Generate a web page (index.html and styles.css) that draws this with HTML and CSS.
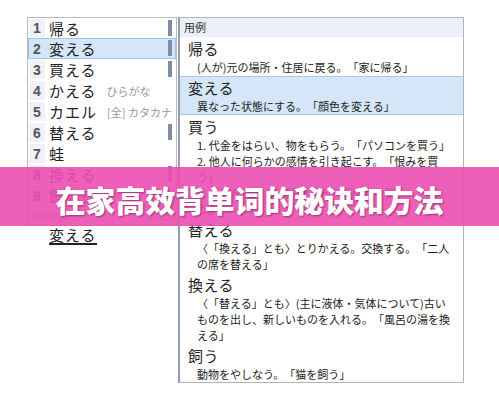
FILE: index.html
```html
<!DOCTYPE html>
<html lang="ja">
<head>
<meta charset="utf-8">
<link rel="stylesheet" href="styles.css">
</head>
<body>
<div class="stage">
  <div class="leftcol">
    <div class="cands">
      <div class="row"><span class="num">1</span><span class="word">帰る</span><span class="bar"></span></div>
      <div class="row sel"><span class="num">2</span><span class="word">変える</span><span class="bar"></span></div>
      <div class="row"><span class="num">3</span><span class="word">買える</span><span class="bar"></span></div>
      <div class="row"><span class="num">4</span><span class="word">かえる</span><span class="note">ひらがな</span></div>
      <div class="row"><span class="num">5</span><span class="word">カエル</span><span class="note">[全] カタカナ</span></div>
      <div class="row"><span class="num">6</span><span class="word">替える</span><span class="bar"></span></div>
      <div class="row"><span class="num">7</span><span class="word">蛙</span></div>
      <div class="row"><span class="num">8</span><span class="word">換える</span><span class="bar"></span></div>
      <div class="row"><span class="num">9</span><span class="word">飼える</span></div>
      <div class="foot"><span>Google</span><span>2/21</span></div>
    </div>
    <div class="compose">変える</div>
  </div>
  <div class="usage">
    <div class="uhead">用例</div>
    <div class="entry">
      <div class="hw">帰る</div>
      <div class="df">(人が)元の場所・住居に戻る。「家に帰る」</div>
    </div>
    <div class="entry hl">
      <div class="hw">変える</div>
      <div class="df">異なった状態にする。「顔色を変える」</div>
    </div>
    <div class="entry">
      <div class="hw">買う</div>
      <div class="df">1. 代金をはらい、物をもらう。「パソコンを買う」</div>
      <div class="df">2. 他人に何らかの感情を引き起こす。「恨みを買</div>
      <div class="df">う」</div>
      <div class="df">3. 価値を認める。評価する。「努力を買</div>
      <div class="df">う」</div>
    </div>
    <div class="entry">
      <div class="hw">替える</div>
      <div class="df">〈「換える」とも〉とりかえる。交換する。「二人</div>
      <div class="df">の席を替える」</div>
    </div>
    <div class="entry">
      <div class="hw">換える</div>
      <div class="df">〈「替える」とも〉(主に液体・気体について)古い</div>
      <div class="df">ものを出し、新しいものを入れる。「風呂の湯を換</div>
      <div class="df">える」</div>
    </div>
    <div class="entry">
      <div class="hw">飼う</div>
      <div class="df">動物をやしなう。「猫を飼う」</div>
    </div>
  </div>
</div>
<div class="banner"><span>在家高效背单词的秘诀和方法</span></div>
</body>
</html>
```
FILE: styles.css
```css
html, body {
  margin: 0;
  padding: 0;
  background: #ffffff;
}
body {
  width: 499px;
  height: 393px;
  overflow: hidden;
  position: relative;
  font-family: "Noto Sans CJK JP", "Noto Sans", sans-serif;
  color: #222;
  text-spacing-trim: space-all;
}
.stage {
  display: flex;
  align-items: flex-start;
  padding: 17px 0 0 27px;
}
.leftcol {
  width: 150px;
  display: flex;
  flex-direction: column;
}
.cands {
  border: 1px solid #b8b8b8;
  background: #fff;
}
.row {
  height: 21px;
  display: flex;
  align-items: center;
  position: relative;
  border: 1px solid transparent;
  box-sizing: border-box;
}
.row:first-child { height: 20px; }
.row.sel {
  background: #d4e6f8;
  border-color: #9ec3e8;
}
.num {
  width: 16px;
  align-self: stretch;
  display: flex;
  align-items: center;
  justify-content: center;
  background: #f1f2f7;
  color: #555;
  font-family: "Liberation Sans", sans-serif;
  font-weight: bold;
  font-size: 14px;
  margin-right: 4px;
}
.row.sel .num { background: transparent; }
.word {
  font-size: 15px;
  letter-spacing: 1px;
  color: #222;
}
.note {
  margin-left: 10px;
  font-size: 11px;
  color: #999;
}
.bar {
  position: absolute;
  right: 3px;
  top: 1px;
  width: 4px;
  height: 16px;
  background: #7e8da6;
}
.foot {
  border-top: 1px solid #d8d8d8;
  height: 18px;
  display: flex;
  justify-content: space-between;
  align-items: center;
  padding: 0 4px 0 4px;
  font-family: "Liberation Sans", sans-serif;
  font-size: 12.5px;
  color: #a8a8a8;
}
.compose {
  align-self: flex-start;
  margin: 0 0 0 22px;
  font-size: 15px;
  line-height: 16px;
  padding-top: 1px;
  letter-spacing: 1px;
  border-bottom: 2px solid #222;
}
.usage {
  margin-left: 1px;
  width: 283px;
  height: 364px;
  border: 1px solid #b4b4b4;
  border-left: 2px solid #8e9db6;
  background: #fff;
}
.uhead {
  height: 19px;
  line-height: 19px;
  background: #eceff7;
  font-size: 11px;
  padding-left: 4px;
  color: #333;
}
.entry {
  padding: 2px 0 1px;
}
.entry.hl {
  background: #d4e6f8;
  border-top: 1px solid #a8c8ea;
  border-bottom: 1px solid #a8c8ea;
  padding: 1px 0 0;
}
.hw {
  font-size: 15px;
  line-height: 20px;
  padding-left: 8px;
  color: #222;
  letter-spacing: 0.5px;
}
.df {
  font-size: 11px;
  line-height: 16px;
  padding-left: 17px;
  color: #222;
  white-space: nowrap;
}
.banner {
  position: absolute;
  left: 0;
  top: 167px;
  width: 499px;
  height: 59px;
  background: rgba(236, 78, 178, 0.9);
  display: flex;
  align-items: center;
  justify-content: center;
}
.banner span {
  font-family: "Noto Sans CJK SC", sans-serif;
  font-weight: 900;
  font-size: 30px;
  color: #fff;
  letter-spacing: -0.2px;
  padding-top: 4px;
  text-shadow: 1px 1px 2px rgba(80, 0, 50, 0.5);
}
```
